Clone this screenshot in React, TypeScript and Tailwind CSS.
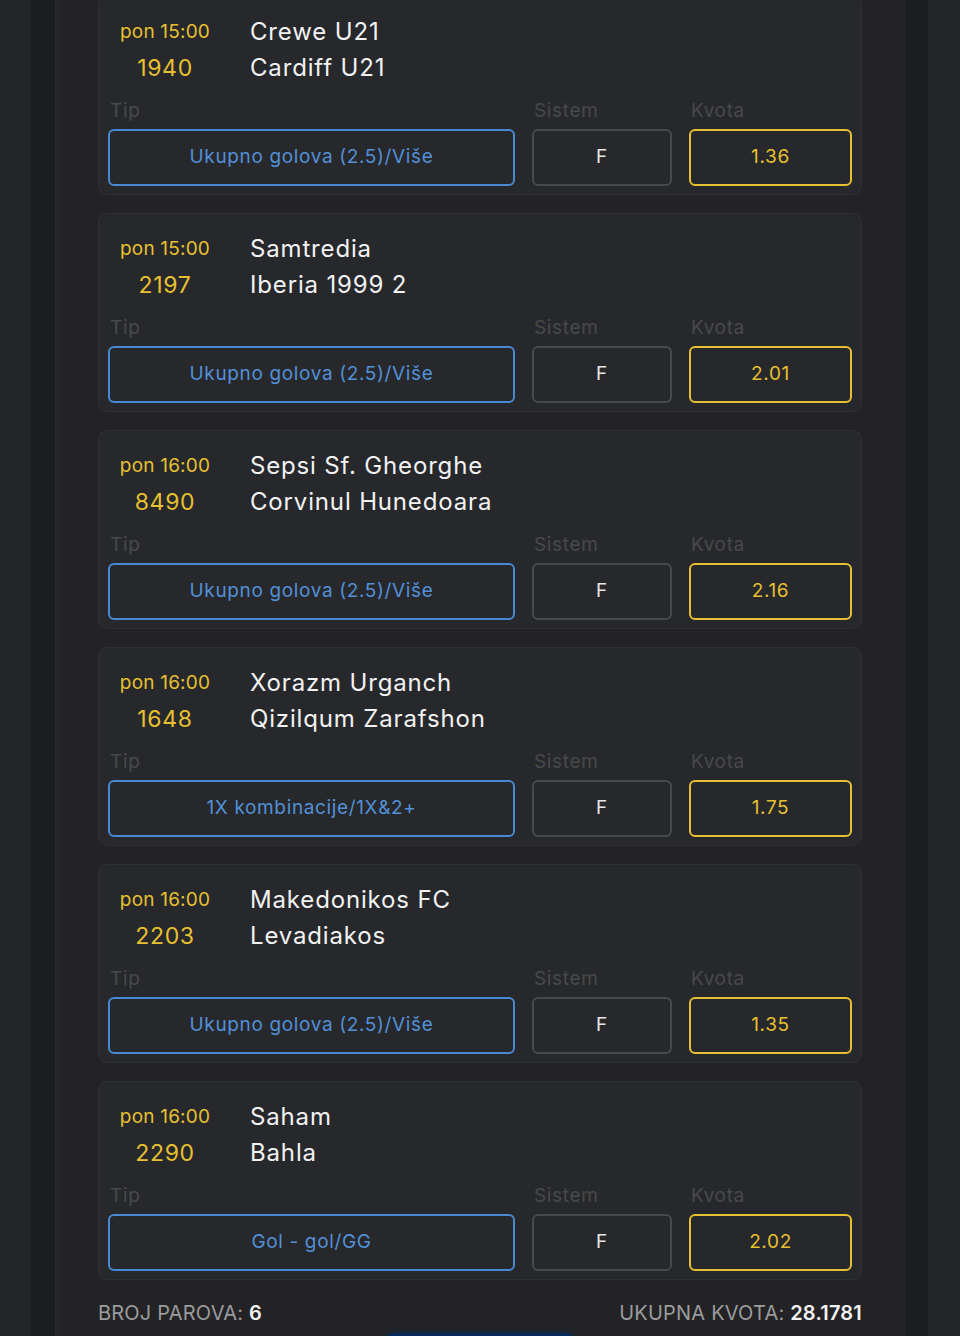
import React from 'react';

type Pair = {
    time: string;
    code: string;
    home: string;
    away: string;
    tip: string;
    sistem: string;
    kvota: string;
};

const pairs: Pair[] = [
    { time: 'pon 15:00', code: '1940', home: 'Crewe U21', away: 'Cardiff U21', tip: 'Ukupno golova (2.5)/Više', sistem: 'F', kvota: '1.36' },
    { time: 'pon 15:00', code: '2197', home: 'Samtredia', away: 'Iberia 1999 2', tip: 'Ukupno golova (2.5)/Više', sistem: 'F', kvota: '2.01' },
    { time: 'pon 16:00', code: '8490', home: 'Sepsi Sf. Gheorghe', away: 'Corvinul Hunedoara', tip: 'Ukupno golova (2.5)/Više', sistem: 'F', kvota: '2.16' },
    { time: 'pon 16:00', code: '1648', home: 'Xorazm Urganch', away: 'Qizilqum Zarafshon', tip: '1X kombinacije/1X&2+', sistem: 'F', kvota: '1.75' },
    { time: 'pon 16:00', code: '2203', home: 'Makedonikos FC', away: 'Levadiakos', tip: 'Ukupno golova (2.5)/Više', sistem: 'F', kvota: '1.35' },
    { time: 'pon 16:00', code: '2290', home: 'Saham', away: 'Bahla', tip: 'Gol - gol/GG', sistem: 'F', kvota: '2.02' },
];

function PairCard({ p }: { p: Pair }) {
    return (
        <div className="h-[199px] rounded-[9px] border border-[#2f3034] bg-[#27282b] px-[9px] pt-[17px]">
            {/* Match info */}
            <div className="grid grid-cols-[114px_1fr] gap-x-[28px]">
                <div className="text-center text-[19px] leading-[36px] tracking-[0.01em] text-[#e6c030]">{p.time}</div>
                <div className="text-[24px] leading-[36px] tracking-[0.035em] text-[#f2f2f2]">{p.home}</div>
                <div className="text-center text-[23px] leading-[36px] tracking-[0.03em] text-[#e6c030]">{p.code}</div>
                <div className="text-[24px] leading-[36px] tracking-[0.035em] text-[#f2f2f2]">{p.away}</div>
            </div>

            {/* Tip / Sistem / Kvota */}
            <div className="mt-[13px] grid grid-cols-[407px_140px_163px] gap-x-[17px] tracking-[0.04em]">
                <div>
                    <div className="pl-[2px] text-[19px] leading-[24px] text-[#48494c]">Tip</div>
                    <div className="mt-[6px] flex h-[57px] items-center justify-center rounded-[6px] border-2 border-[#4a88d2] text-[19px] text-[#5290d8]">
                        {p.tip}
                    </div>
                </div>
                <div>
                    <div className="pl-[2px] text-[19px] leading-[24px] text-[#48494c]">Sistem</div>
                    <div className="mt-[6px] flex h-[57px] items-center justify-center rounded-[6px] border-2 border-[#48494c] text-[19px] text-[#e6e6e6]">
                        {p.sistem}
                    </div>
                </div>
                <div>
                    <div className="pl-[2px] text-[19px] leading-[24px] text-[#48494c]">Kvota</div>
                    <div className="mt-[6px] flex h-[57px] items-center justify-center rounded-[6px] border-2 border-[#e6c030] text-[19px] text-[#e6c030]">
                        {p.kvota}
                    </div>
                </div>
            </div>
        </div>
    );
}

export default function App() {
    return (
        <div
            className="flex h-[1336px] overflow-hidden bg-[#242528] pl-[31px] pr-[32px]"
            style={{ fontFamily: 'Inter, "Noto Sans", sans-serif' }}
        >
            <div className="flex flex-1 bg-[#1c1d20] pl-[24px] pr-[23px]">
                <div className="flex-1 overflow-hidden bg-[#232325] px-[43px] shadow-[inset_12px_0_10px_-8px_rgba(255,255,255,0.03)]">
                    <div className="-mt-[4px] flex flex-col gap-[18px]">
                        {pairs.map((p) => (
                            <PairCard key={p.code} p={p} />
                        ))}
                    </div>

                    {/* Summary */}
                    <div className="mt-[21px] flex items-center justify-between text-[20px] leading-[24px] tracking-[0.01em] text-[#9a9b9d]">
                        <div>
                            BROJ PAROVA: <span className="font-semibold text-[#f2f2f2]">6</span>
                        </div>
                        <div>
                            UKUPNA KVOTA: <span className="font-semibold text-[#f2f2f2]">28.1781</span>
                        </div>
                    </div>

                    <div className="mt-[8px] flex justify-center">
                        <div className="h-[10px] w-[188px] rounded-t-[8px] bg-[#0a2a5e] shadow-[0_0_6px_rgba(10,42,94,0.8)]" />
                    </div>
                </div>
            </div>
        </div>
    );
}
